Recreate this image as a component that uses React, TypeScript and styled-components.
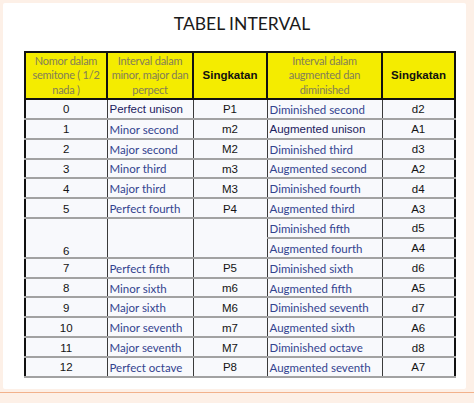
import styled, { createGlobalStyle } from "styled-components";

const GlobalStyle = createGlobalStyle`
  html, body {
    margin: 0;
    padding: 0;
    background: #fdf0e7;
  }
`;

type Interval = {
    semitone: string;
    name: string;
    short: string;
    alt: string;
    altShort: string;
    strong?: boolean;
    altStrong?: boolean;
};

const rowsBefore: Interval[] = [
    {semitone: "0", name: "Perfect unison", short: "P1", alt: "Diminished second", altShort: "d2", strong: true},
    {semitone: "1", name: "Minor second", short: "m2", alt: "Augmented unison", altShort: "A1", altStrong: true},
    {semitone: "2", name: "Major second", short: "M2", alt: "Diminished third", altShort: "d3"},
    {semitone: "3", name: "Minor third", short: "m3", alt: "Augmented second", altShort: "A2"},
    {semitone: "4", name: "Major third", short: "M3", alt: "Diminished fourth", altShort: "d4"},
    {semitone: "5", name: "Perfect fourth", short: "P4", alt: "Augmented third", altShort: "A3"},
];

const rowsAfter: Interval[] = [
    {semitone: "7", name: "Perfect fifth", short: "P5", alt: "Diminished sixth", altShort: "d6"},
    {semitone: "8", name: "Minor sixth", short: "m6", alt: "Augmented fifth", altShort: "A5"},
    {semitone: "9", name: "Major sixth", short: "M6", alt: "Diminished seventh", altShort: "d7"},
    {semitone: "10", name: "Minor seventh", short: "m7", alt: "Augmented sixth", altShort: "A6"},
    {semitone: "11", name: "Major seventh", short: "M7", alt: "Diminished octave", altShort: "d8"},
    {semitone: "12", name: "Perfect octave", short: "P8", alt: "Augmented seventh", altShort: "A7"},
];

const IntervalRow = ({row}: { row: Interval }) => (
    <BodyRow>
        <NumberCell>{row.semitone}</NumberCell>
        <NameCell $strong={row.strong}>{row.name}</NameCell>
        <NumberCell>{row.short}</NumberCell>
        <NameCell $strong={row.altStrong}>{row.alt}</NameCell>
        <NumberCell>{row.altShort}</NumberCell>
    </BodyRow>
);

export default function App() {
    return (
        <Page>
            <GlobalStyle/>
            <Card>
                <Title>TABEL INTERVAL</Title>
                <Table>
                    <colgroup>
                        <col style={{width: 82}}/>
                        <col style={{width: 86}}/>
                        <col style={{width: 74}}/>
                        <col style={{width: 115}}/>
                        <col style={{width: 73}}/>
                    </colgroup>
                    <thead>
                    <tr>
                        <HeadCell>Nomor dalam semitone ( 1/2 nada )</HeadCell>
                        <HeadCell>Interval dalam minor, major dan perpect</HeadCell>
                        <HeadCell $bold>Singkatan</HeadCell>
                        <HeadCell>Interval dalam augmented dan diminished</HeadCell>
                        <HeadCell $bold>Singkatan</HeadCell>
                    </tr>
                    </thead>
                    <tbody>
                    {rowsBefore.map((row) => <IntervalRow key={row.semitone} row={row}/>)}
                    <BodyRow>
                        <NumberCell rowSpan={2} $bottom>6</NumberCell>
                        <NameCell rowSpan={2}/>
                        <NumberCell rowSpan={2}/>
                        <NameCell>Diminished fifth</NameCell>
                        <NumberCell>d5</NumberCell>
                    </BodyRow>
                    <BodyRow>
                        <NameCell>Augmented fourth</NameCell>
                        <NumberCell>A4</NumberCell>
                    </BodyRow>
                    {rowsAfter.map((row) => <IntervalRow key={row.semitone} row={row}/>)}
                    </tbody>
                </Table>
            </Card>
            <BottomRule/>
        </Page>
    );
}

const Page = styled.div`
  width: 474px;
  height: 403px;
  padding: 3px 8px 0 3px;
  box-sizing: border-box;
  background: #fdf0e7;
`;

const Card = styled.div`
  height: 386px;
  padding: 0 12px 0 21px;
  box-sizing: border-box;
  background: #ffffff;
  border-radius: 2px;
`;

const Title = styled.h1`
  margin: 0;
  height: 48px;
  padding: 10px 0 0 6px;
  box-sizing: border-box;
  text-align: center;
  font-family: Lato, "Open Sans", sans-serif;
  font-weight: 400;
  font-size: 17.5px;
  color: #1a1a1a;
`;

const Table = styled.table`
  width: 430px;
  table-layout: fixed;
  border-collapse: collapse;
  border: 2px solid #111111;
`;

const HeadCell = styled.th<{ $bold?: boolean }>`
  height: 45px;
  padding: 0;
  background: #f4ec00;
  border: 2px solid #111111;
  text-align: center;
  vertical-align: middle;
  font-family: ${({$bold}) => $bold ? '"Liberation Sans", Arial, sans-serif' : 'Lato, "Open Sans", sans-serif'};
  font-weight: ${({$bold}) => $bold ? 700 : 400};
  font-size: ${({$bold}) => $bold ? '11.5px' : '11px'};
  letter-spacing: ${({$bold}) => $bold ? '0' : '-0.25px'};
  line-height: 14.5px;
  color: ${({$bold}) => $bold ? '#111111' : '#837e58'};
`;

const BodyRow = styled.tr`
  height: 19.85px;
`;

const NumberCell = styled.td<{ $bottom?: boolean }>`
  padding: 1px 2px 0;
  background: #f8f9fc;
  border-top: 2px solid #a2a2a2;
  border-bottom: 2px solid #a2a2a2;
  border-left: 1.5px solid #3a3a3a;
  border-right: 1.5px solid #3a3a3a;
  text-align: center;
  vertical-align: ${({$bottom}) => $bottom ? 'bottom' : 'middle'};
  font-family: "Liberation Sans", Arial, sans-serif;
  font-size: 11.5px;
  color: #141414;
`;

const NameCell = styled.td<{ $strong?: boolean }>`
  padding: 1px 2px 0;
  background: #f8f9fc;
  border-top: 2px solid #a2a2a2;
  border-bottom: 2px solid #a2a2a2;
  border-left: 1.5px solid #3a3a3a;
  border-right: 1.5px solid #3a3a3a;
  text-align: left;
  vertical-align: middle;
  white-space: nowrap;
  font-family: ${({$strong}) => $strong ? '"Liberation Sans", Arial, sans-serif' : 'Lato, "Open Sans", sans-serif'};
  font-size: 11.5px;
  color: ${({$strong}) => $strong ? '#1b2160' : '#33438f'};
`;

const BottomRule = styled.div`
  height: 3px;
  margin: 0 -8px 0 -3px;
  border-bottom: 1.5px solid #f2b28c;
`;
